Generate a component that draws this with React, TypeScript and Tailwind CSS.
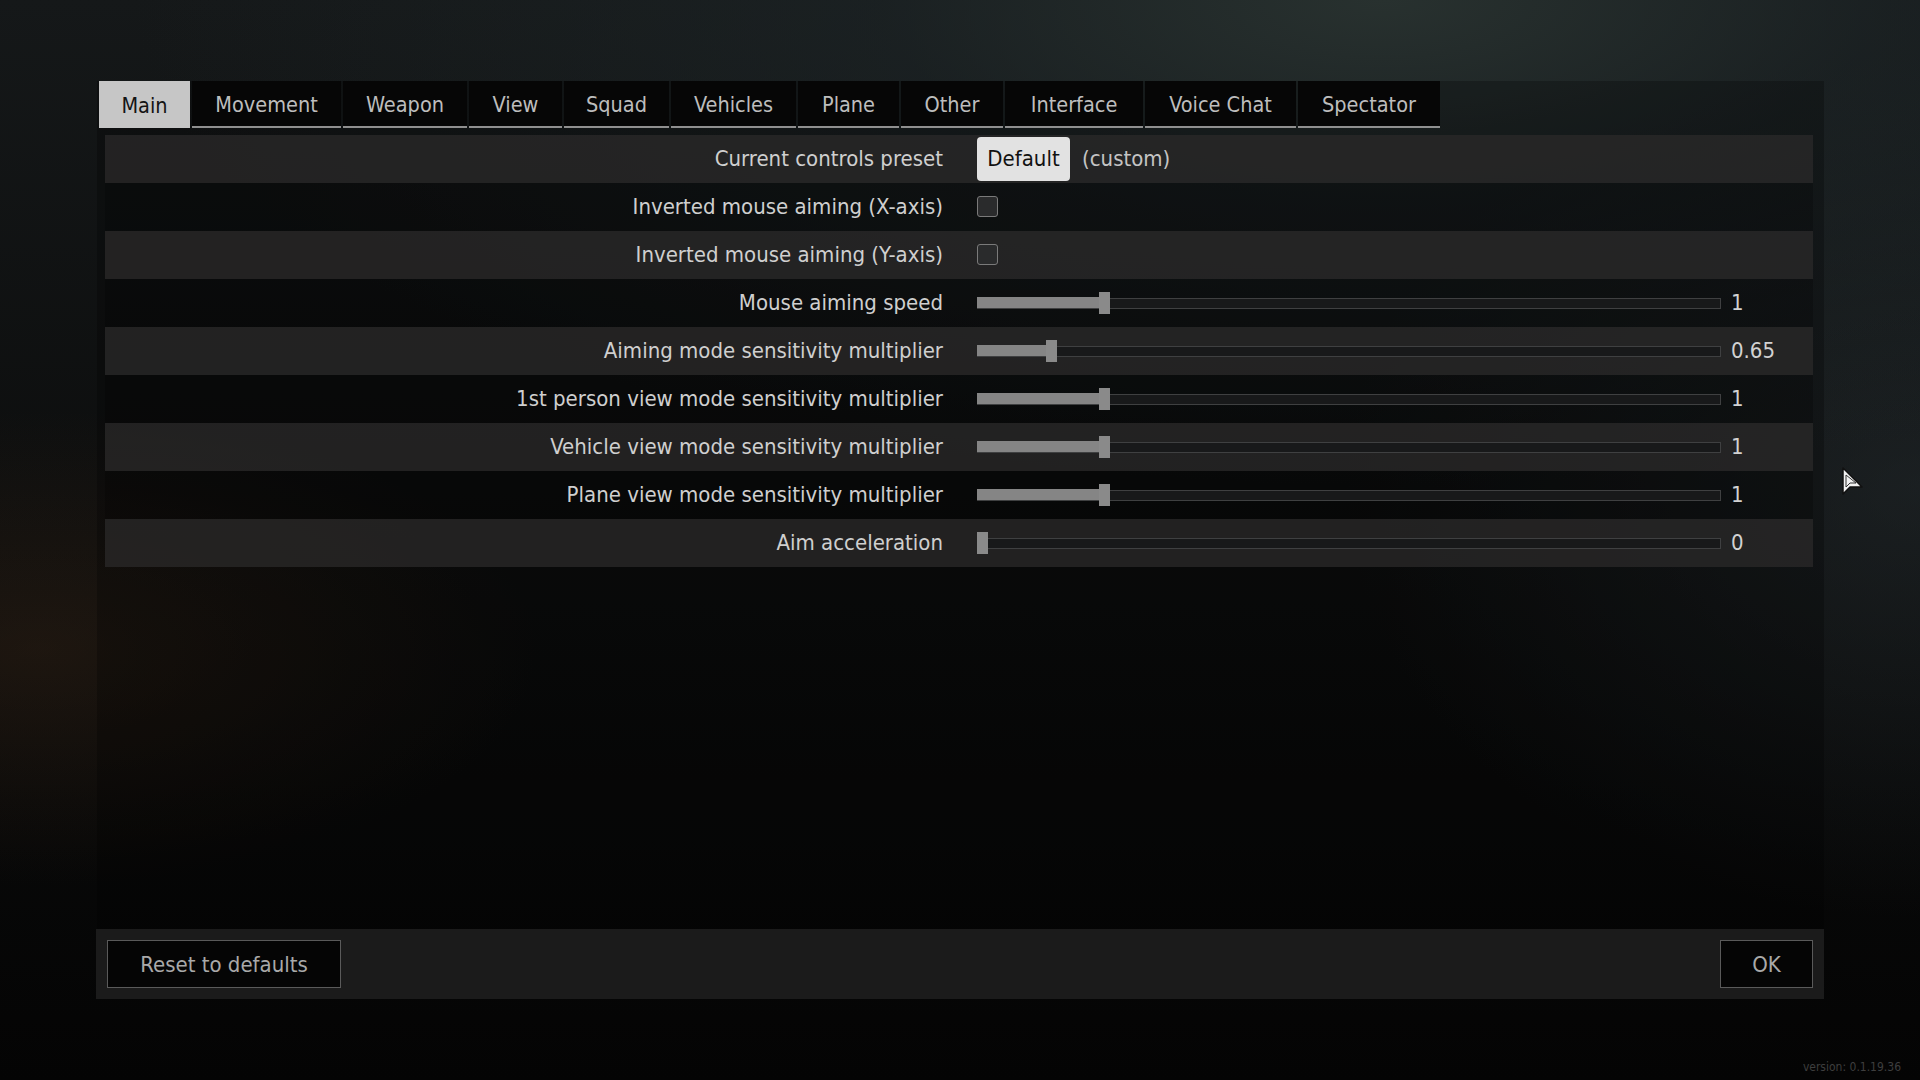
import React from "react";

const tabs: { name: string; w: number }[] = [
  { name: "Main", w: 91 },
  { name: "Movement", w: 149 },
  { name: "Weapon", w: 124 },
  { name: "View", w: 93 },
  { name: "Squad", w: 105 },
  { name: "Vehicles", w: 125 },
  { name: "Plane", w: 101 },
  { name: "Other", w: 102 },
  { name: "Interface", w: 138 },
  { name: "Voice Chat", w: 151 },
  { name: "Spectator", w: 142 },
];

type Row =
  | { kind: "preset"; label: string }
  | { kind: "check"; label: string }
  | { kind: "slider"; label: string; pos: number; value: string };

const rows: Row[] = [
  { kind: "preset", label: "Current controls preset" },
  { kind: "check", label: "Inverted mouse aiming (X-axis)" },
  { kind: "check", label: "Inverted mouse aiming (Y-axis)" },
  { kind: "slider", label: "Mouse aiming speed", pos: 122, value: "1" },
  { kind: "slider", label: "Aiming mode sensitivity multiplier", pos: 69, value: "0.65" },
  { kind: "slider", label: "1st person view mode sensitivity multiplier", pos: 122, value: "1" },
  { kind: "slider", label: "Vehicle view mode sensitivity multiplier", pos: 122, value: "1" },
  { kind: "slider", label: "Plane view mode sensitivity multiplier", pos: 122, value: "1" },
  { kind: "slider", label: "Aim acceleration", pos: 0, value: "0" },
];

function Slider({ pos, value }: { pos: number; value: string }) {
  return (
    <div className="flex items-center">
      <div className="relative w-[744px] h-[22px] flex items-center">
        <div className="w-full h-[11px] bg-[#18191a] border border-[#3f4041]" />
        <div
          className="absolute left-0 top-[5px] h-[11px] bg-[#858585]"
          style={{ width: pos + 4 }}
        />
        <div
          className="absolute top-0 h-[22px] w-[11px] bg-[#8a8a8a]"
          style={{ left: pos }}
        />
      </div>
      <div className="ml-[10px] pb-[2px] text-[#d2d2d2]">{value}</div>
    </div>
  );
}

function Control({ row }: { row: Row }) {
  if (row.kind === "preset") {
    return (
      <div className="flex items-center">
        <div className="h-[44px] w-[93px] pb-[2px] rounded-[4px] bg-[#e2e2e2] text-[#111] flex items-center justify-center">
          Default
        </div>
        <div className="ml-[12px] pb-[2px] text-[#c4c4c4]">(custom)</div>
      </div>
    );
  }
  if (row.kind === "check") {
    return (
      <div className="w-[21px] h-[21px] -mt-[2px] rounded-[3px] border border-[#7a7a7a] bg-[#2a2b2c]" />
    );
  }
  return <Slider pos={row.pos} value={row.value} />;
}

export default function App() {
  return (
    <div
      className="relative w-[1920px] h-[1080px] overflow-hidden bg-[#050505] bg-[image:radial-gradient(ellipse_65%_45%_at_72%_0%,#28312f_0%,rgba(30,38,40,0.6)_40%,rgba(0,0,0,0)_100%),radial-gradient(ellipse_26%_22%_at_2%_60%,rgba(70,45,25,0.32)_0%,rgba(0,0,0,0)_100%),radial-gradient(ellipse_30%_40%_at_100%_45%,rgba(40,48,52,0.5)_0%,rgba(0,0,0,0)_100%),linear-gradient(to_bottom,#151819_0%,#0c0d0d_50%,#040404_100%)]"
      style={{ fontFamily: '"DejaVu Sans Condensed", "DejaVu Sans", sans-serif', fontStretch: "condensed" }}
    >
      <div className="ml-[97px] pt-[81px] w-[1727px] flex flex-col">
        <div className="h-[848px] flex flex-col bg-black/25">
          {/* tabs */}
          <div className="flex gap-[2px] pl-[2px] h-[47px]">
            {tabs.map((t, i) => (
              <div
                key={t.name}
                className={
                  i === 0
                    ? "h-full flex items-center justify-center pt-[3px] bg-[#c6c6c6] text-[#141414] text-[21.5px]"
                    : "h-full flex items-center justify-center pt-[3px] bg-[#060606] text-[#bdbdbd] text-[21.5px] border-b-2 border-[#8f8f8f]"
                }
                style={{ width: t.w }}
              >
                {t.name}
              </div>
            ))}
          </div>
          {/* rows */}
          <div className="mt-[7px] ml-[8px] w-[1708px] flex flex-col text-[22px]">
            {rows.map((r, i) => (
              <div
                key={r.label}
                className={
                  "h-[48px] flex items-center " +
                  (i % 2 === 0 ? "bg-[#2b2a29]/75" : "bg-black/20")
                }
              >
                <div className="w-[838px] pb-[2px] text-right text-[#cfcfcf] whitespace-nowrap">{r.label}</div>
                <div className="ml-[34px]">
                  <Control row={r} />
                </div>
              </div>
            ))}
          </div>
        </div>
        {/* bottom bar */}
        <div className="-ml-[1px] h-[70px] w-[1728px] bg-[#1b1b1b] flex items-center justify-between px-[11px] text-[22px]">
          <div className="h-[48px] w-[234px] border border-[#5a5a5a] bg-[#050505] text-[#a9a9a9] flex items-center justify-center">
            Reset to defaults
          </div>
          <div className="h-[48px] w-[93px] border border-[#5a5a5a] bg-[#050505] text-[#a9a9a9] flex items-center justify-center">
            OK
          </div>
        </div>
      </div>

      <div className="absolute right-[19px] bottom-[4px] text-[12px] text-[#3e3e3e]">version: 0.1.19.36</div>

      {/* cursor */}
      <svg
        className="absolute left-[1841px] top-[467px]"
        width="24"
        height="32"
        viewBox="0 0 24 32"
      >
        <path d="M2 1 L2 27 L9 20 L21 20 Z" fill="#f2f2f2" stroke="#111" strokeWidth="1.5" strokeLinejoin="round" />
        <path d="M5 8 L5 20 L9 16 L15 16 Z" fill="none" stroke="#333" strokeWidth="1" />
      </svg>
    </div>
  );
}
